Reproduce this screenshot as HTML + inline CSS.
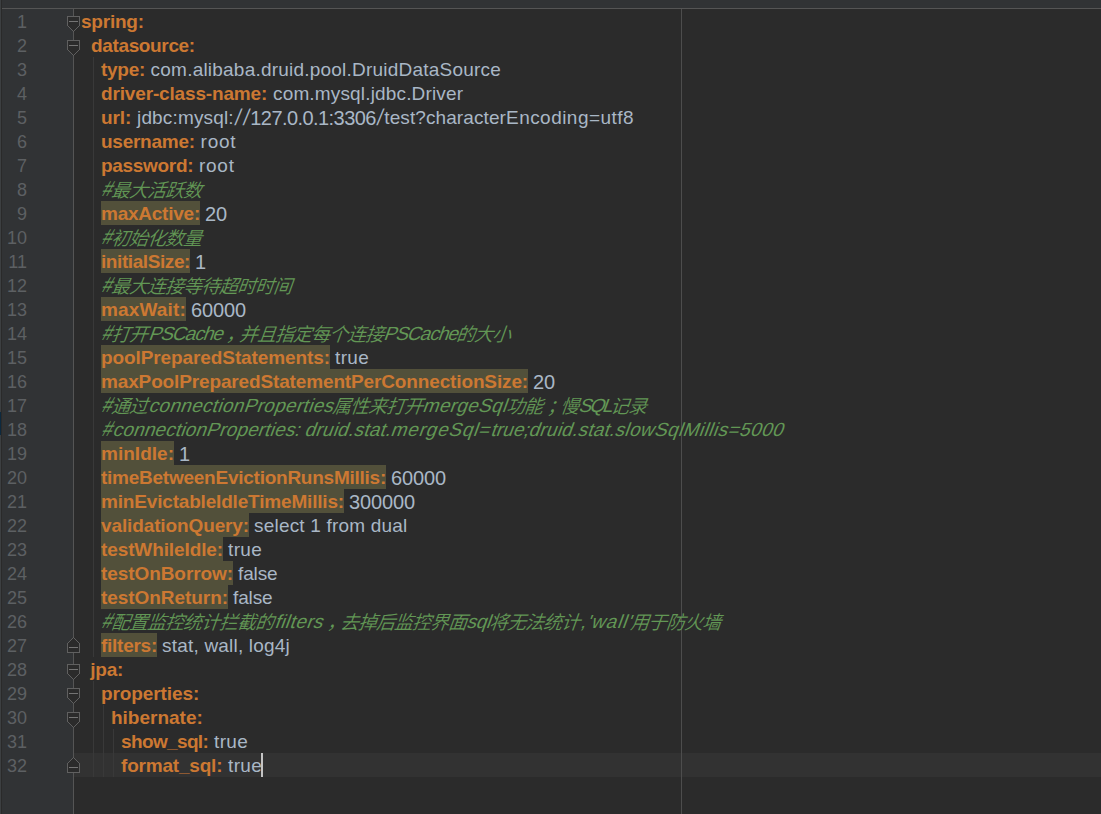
<!DOCTYPE html><html><head><meta charset="utf-8"><title>application.yml</title><style>
html,body{margin:0;padding:0;}
body{width:1101px;height:814px;background:#2b2b2b;overflow:hidden;position:relative;
 font-family:"Liberation Sans","Noto Sans CJK SC",sans-serif;font-size:19px;line-height:24px;color:#a9b7c6;}
#top{position:absolute;left:0;top:0;width:1101px;height:8px;background:#313335;}
#topline{position:absolute;left:2px;top:8px;width:1099px;height:1px;background:#555555;}
#edge{position:absolute;left:0;top:0;width:1px;height:814px;background:#3c3f41;border-right:1px solid #2a2a2a;}
#gutter{position:absolute;left:2px;top:9px;width:71px;height:805px;background:#313335;}
#foldline{position:absolute;left:73px;top:9px;width:1px;height:805px;background:#555555;}
#margin{position:absolute;left:681px;top:9px;width:1px;height:805px;background:#4d4d4d;}
#cur{position:absolute;left:74px;top:753px;width:1027px;height:24px;background:#323232;}
.g{position:absolute;width:1px;background:#393939;}
.n{position:absolute;left:0;width:27px;text-align:right;color:#5d6063;font-size:18px;height:24px;line-height:24px;}
.h{position:absolute;left:101px;height:24px;background:#52503a;}
.l{position:absolute;left:0;height:24px;width:1101px;white-space:pre;}
.l span{position:absolute;top:1px;white-space:pre;line-height:24px;height:24px;}
.k{color:#cc7832;font-weight:bold;}
.v,.vs,.vd{color:#a9b7c6;}
.l span.vd{font-size:20px;}
.l span.vs{transform-origin:0 12.5px;transform:translateX(1.4px) skewX(-10.5deg) scaleY(1.2);}
.l span.c,.l span.ch{color:#629755;transform:skewX(-20deg);transform-origin:0 18px;}
.l span.ch{transform:skewX(-20deg) scale(0.94,1.14);}
.l span.z{color:#629755;font-weight:350;font-size:18.75px;letter-spacing:-0.75px;font-family:"Noto Sans CJK SC","Liberation Sans",sans-serif;top:-0.5px;transform:skewX(-20deg);transform-origin:0 19.5px;}
#sel{position:absolute;left:0;top:412px;width:1px;height:23px;background:#0d293e;}
#caret{position:absolute;left:261px;top:753px;width:2px;height:24px;background:#c4c4c4;}
svg{position:absolute;left:0;top:0;}
</style></head><body>
<div id="top"></div><div id="gutter"></div><div id="edge"></div><div id="sel"></div><div id="topline"></div><div id="cur"></div><div id="foldline"></div><div id="margin"></div>
<div class="g" style="left:93px;top:57px;height:600px"></div>
<div class="g" style="left:93px;top:681px;height:96px"></div>
<div class="g" style="left:103px;top:705px;height:72px"></div>
<div class="g" style="left:113px;top:729px;height:48px"></div>
<div class="h" style="top:201px;width:99px"></div>
<div class="h" style="top:249px;width:89px"></div>
<div class="h" style="top:297px;width:85px"></div>
<div class="h" style="top:345px;width:229px"></div>
<div class="h" style="top:369px;width:427px"></div>
<div class="h" style="top:441px;width:73px"></div>
<div class="h" style="top:465px;width:285px"></div>
<div class="h" style="top:489px;width:243px"></div>
<div class="h" style="top:513px;width:148px"></div>
<div class="h" style="top:537px;width:122px"></div>
<div class="h" style="top:561px;width:132px"></div>
<div class="h" style="top:585px;width:127px"></div>
<div class="h" style="top:633px;width:56px"></div>
<svg width="1101" height="814" viewBox="0 0 1101 814" shape-rendering="crispEdges"><path d="M67.5,16.5H79.5V25.5L73.5,31.5L67.5,25.5Z" fill="#2b2b2b" stroke="#606060"/><rect x="69" y="21" width="9" height="1" fill="#747474"/><path d="M67.5,40.5H79.5V49.5L73.5,55.5L67.5,49.5Z" fill="#2b2b2b" stroke="#606060"/><rect x="69" y="45" width="9" height="1" fill="#747474"/><path d="M67.5,664.5H79.5V673.5L73.5,679.5L67.5,673.5Z" fill="#2b2b2b" stroke="#606060"/><rect x="69" y="669" width="9" height="1" fill="#747474"/><path d="M67.5,688.5H79.5V697.5L73.5,703.5L67.5,697.5Z" fill="#2b2b2b" stroke="#606060"/><rect x="69" y="693" width="9" height="1" fill="#747474"/><path d="M67.5,712.5H79.5V721.5L73.5,727.5L67.5,721.5Z" fill="#2b2b2b" stroke="#606060"/><rect x="69" y="717" width="9" height="1" fill="#747474"/><path d="M67.5,652.5H79.5V643.5L73.5,637.5L67.5,643.5Z" fill="#2b2b2b" stroke="#606060"/><rect x="69" y="647" width="9" height="1" fill="#747474"/><path d="M67.5,772.5H79.5V763.5L73.5,757.5L67.5,763.5Z" fill="#2b2b2b" stroke="#606060"/><rect x="69" y="767" width="9" height="1" fill="#747474"/></svg>
<div class="n" style="top:10px">1</div>
<div class="n" style="top:34px">2</div>
<div class="n" style="top:58px">3</div>
<div class="n" style="top:82px">4</div>
<div class="n" style="top:106px">5</div>
<div class="n" style="top:130px">6</div>
<div class="n" style="top:154px">7</div>
<div class="n" style="top:178px">8</div>
<div class="n" style="top:202px">9</div>
<div class="n" style="top:226px">10</div>
<div class="n" style="top:250px">11</div>
<div class="n" style="top:274px">12</div>
<div class="n" style="top:298px">13</div>
<div class="n" style="top:322px">14</div>
<div class="n" style="top:346px">15</div>
<div class="n" style="top:370px">16</div>
<div class="n" style="top:394px">17</div>
<div class="n" style="top:418px">18</div>
<div class="n" style="top:442px">19</div>
<div class="n" style="top:466px">20</div>
<div class="n" style="top:490px">21</div>
<div class="n" style="top:514px">22</div>
<div class="n" style="top:538px">23</div>
<div class="n" style="top:562px">24</div>
<div class="n" style="top:586px">25</div>
<div class="n" style="top:610px">26</div>
<div class="n" style="top:634px">27</div>
<div class="n" style="top:658px">28</div>
<div class="n" style="top:682px">29</div>
<div class="n" style="top:706px">30</div>
<div class="n" style="top:730px">31</div>
<div class="n" style="top:754px">32</div>
<div class="l" style="top:9px"><span class="k" style="left:81px;letter-spacing:-0.227px">spring:</span></div>
<div class="l" style="top:33px"><span class="k" style="left:91px;letter-spacing:-0.355px">datasource:</span></div>
<div class="l" style="top:57px"><span class="k" style="left:101px;letter-spacing:-0.281px">type:</span> <span class="v" style="left:150.6px;letter-spacing:0.216px">com.alibaba.druid.pool.DruidDataSource</span></div>
<div class="l" style="top:81px"><span class="k" style="left:101px;letter-spacing:-0.154px">driver-class-name:</span> <span class="v" style="left:273px;letter-spacing:0.158px">com.mysql.jdbc.Driver</span></div>
<div class="l" style="top:105px"><span class="k" style="left:101px;letter-spacing:-0.077px">url:</span> <span class="v" style="left:137px;letter-spacing:0.161px">jdbc:mysql:</span><span class="vs" style="left:233.8px;letter-spacing:2.969px">//</span><span class="vd" style="left:250.3px;letter-spacing:-0.569px">127.0.0.1:3306</span><span class="vs" style="left:375.8px;letter-spacing:3.219px">/</span><span class="v" style="left:384.3px;letter-spacing:0.092px">test?character</span><span class="v" style="left:506px;letter-spacing:0.460px">Encoding=utf8</span></div>
<div class="l" style="top:129px"><span class="k" style="left:101px;letter-spacing:-0.257px">username:</span> <span class="v" style="left:200.6px;letter-spacing:0.738px">root</span></div>
<div class="l" style="top:153px"><span class="k" style="left:101px;letter-spacing:-0.315px">password:</span> <span class="v" style="left:199px;letter-spacing:0.737px">root</span></div>
<div class="l" style="top:177px"><span class="ch" style="left:101px;letter-spacing:0.122px">#</span><span class="z" style="left:111.2px">最大活跃数</span></div>
<div class="l" style="top:201px"><span class="k" style="left:101px;letter-spacing:-0.239px">maxActive:</span> <span class="vd" style="left:205px;letter-spacing:-0.125px">20</span></div>
<div class="l" style="top:225px"><span class="ch" style="left:101px;letter-spacing:0.122px">#</span><span class="z" style="left:111.2px">初始化数量</span></div>
<div class="l" style="top:249px"><span class="k" style="left:101px;letter-spacing:-0.414px">initialSize:</span> <span class="vd" style="left:195px;letter-spacing:-0.125px">1</span></div>
<div class="l" style="top:273px"><span class="ch" style="left:101px;letter-spacing:0.122px">#</span><span class="z" style="left:111.2px">最大连接等待超时时间</span></div>
<div class="l" style="top:297px"><span class="k" style="left:101px;letter-spacing:0.154px">maxWait:</span> <span class="vd" style="left:191px;letter-spacing:-0.125px">60000</span></div>
<div class="l" style="top:321px"><span class="ch" style="left:101px;letter-spacing:0.122px">#</span><span class="z" style="left:111.2px">打开</span><span class="c" style="left:147.7px;letter-spacing:-0.997px">PSCache</span><span class="z" style="left:225.5px">，</span><span class="z" style="left:238.5px">并且指定每个连接</span><span class="c" style="left:383px;letter-spacing:-0.997px">PSCache</span><span class="z" style="left:455.8px">的大小</span></div>
<div class="l" style="top:345px"><span class="k" style="left:101px;letter-spacing:-0.097px">poolPreparedStatements:</span> <span class="v" style="left:335px;letter-spacing:0.362px">true</span></div>
<div class="l" style="top:369px"><span class="k" style="left:101px;letter-spacing:-0.140px">maxPoolPreparedStatementPerConnectionSize:</span> <span class="vd" style="left:533px;letter-spacing:-0.125px">20</span></div>
<div class="l" style="top:393px"><span class="ch" style="left:101px;letter-spacing:0.122px">#</span><span class="z" style="left:111.2px">通过</span><span class="c" style="left:147.7px;letter-spacing:0.305px">connectionProperties</span><span class="z" style="left:331.8px">属性来打开</span><span class="c" style="left:422.3px;letter-spacing:0.334px">mergeSql</span><span class="z" style="left:505.8px">功能</span><span class="z" style="left:546.8px">；</span><span class="z" style="left:559.8px">慢</span><span class="c" style="left:578.3px;letter-spacing:-2.010px">SQL</span><span class="z" style="left:609.8px">记录</span></div>
<div class="l" style="top:417px"><span class="ch" style="left:101px;letter-spacing:0.122px">#</span><span class="c" style="left:111.7px;letter-spacing:0.168px">connectionProperties:</span> <span class="c" style="left:304px;letter-spacing:0.233px">druid.stat.</span><span class="c" style="left:390px;letter-spacing:0.786px">mergeSql=</span><span class="c" style="left:489.5px;letter-spacing:-0.006px">true;</span><span class="c" style="left:527.5px;letter-spacing:0.233px">druid.stat.</span><span class="c" style="left:613.5px;letter-spacing:0.359px">slowSql</span><span class="c" style="left:681.5px;letter-spacing:0.447px">Millis=5000</span></div>
<div class="l" style="top:441px"><span class="k" style="left:101px;letter-spacing:0.020px">minIdle:</span> <span class="vd" style="left:179px;letter-spacing:-0.125px">1</span></div>
<div class="l" style="top:465px"><span class="k" style="left:101px;letter-spacing:-0.248px">timeBetweenEvictionRunsMillis:</span> <span class="vd" style="left:391px;letter-spacing:-0.125px">60000</span></div>
<div class="l" style="top:489px"><span class="k" style="left:101px;letter-spacing:-0.177px">minEvictableIdleTimeMillis:</span> <span class="vd" style="left:349px;letter-spacing:-0.125px">300000</span></div>
<div class="l" style="top:513px"><span class="k" style="left:101px;letter-spacing:-0.120px">validationQuery:</span> <span class="v" style="left:254px;letter-spacing:0.196px">select 1 from dual</span></div>
<div class="l" style="top:537px"><span class="k" style="left:101px;letter-spacing:-0.108px">testWhileIdle:</span> <span class="v" style="left:228px;letter-spacing:0.362px">true</span></div>
<div class="l" style="top:561px"><span class="k" style="left:101px;letter-spacing:-0.077px">testOnBorrow:</span> <span class="v" style="left:238px;letter-spacing:-0.128px">false</span></div>
<div class="l" style="top:585px"><span class="k" style="left:101px;letter-spacing:-0.056px">testOnReturn:</span> <span class="v" style="left:233px;letter-spacing:-0.128px">false</span></div>
<div class="l" style="top:609px"><span class="ch" style="left:101px;letter-spacing:0.122px">#</span><span class="z" style="left:111.2px">配置监控统计拦截的</span><span class="c" style="left:273.7px;letter-spacing:0.413px">filters</span><span class="z" style="left:326.5px">，</span><span class="z" style="left:339.5px">去掉后监控界面</span><span class="c" style="left:466px;letter-spacing:-0.266px">sql</span><span class="z" style="left:489.0px">将无法统计</span><span class="c" style="left:579.5px;letter-spacing:0.819px">,'wall'</span><span class="z" style="left:630.0px">用于防火墙</span></div>
<div class="l" style="top:633px"><span class="k" style="left:101px;letter-spacing:-0.260px">filters:</span> <span class="v" style="left:162px;letter-spacing:0.199px">stat, wall, log4j</span></div>
<div class="l" style="top:657px"><span class="k" style="left:90.2px;letter-spacing:-0.195px">jpa:</span></div>
<div class="l" style="top:681px"><span class="k" style="left:101px;letter-spacing:-0.095px">properties:</span></div>
<div class="l" style="top:705px"><span class="k" style="left:111px;letter-spacing:-0.006px">hibernate:</span></div>
<div class="l" style="top:729px"><span class="k" style="left:121px;letter-spacing:-0.634px">show_sql:</span> <span class="v" style="left:214px;letter-spacing:0.362px">true</span></div>
<div class="l" style="top:753px"><span class="k" style="left:121px;letter-spacing:-0.197px">format_sql:</span> <span class="v" style="left:228px;letter-spacing:0.362px">true</span></div>
<div id="caret"></div>
</body></html>
